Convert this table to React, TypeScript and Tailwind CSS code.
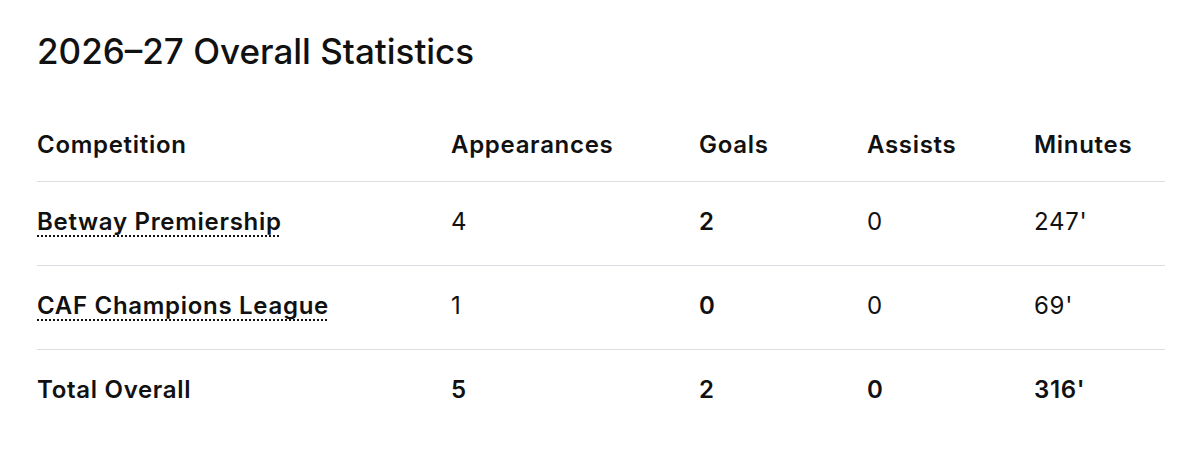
const rows = [
  { name: "Betway Premiership", apps: "4", goals: "2", assists: "0", mins: "247'" },
  { name: "CAF Champions League", apps: "1", goals: "0", assists: "0", mins: "69'" },
];

export default function App() {
  return (
    <div className="min-h-screen bg-white pl-[37px] pt-[31px] text-[#111111]" style={{ fontFamily: "Inter, 'Noto Sans', sans-serif" }}>
      <h2 className="mb-[36px] text-[35px] font-medium leading-[40px]">2026–27 Overall Statistics</h2>
      <table className="w-[1128px] table-fixed border-collapse text-left text-[24px] leading-[28px] tracking-[0.7px]">
        <colgroup>
          <col className="w-[414px]" />
          <col className="w-[248px]" />
          <col className="w-[168px]" />
          <col className="w-[167px]" />
          <col className="w-[131px]" />
        </colgroup>
        <thead>
          <tr className="border-b border-[#dcdce2]">
            <th className="pt-[24px] pb-[22px] font-semibold">Competition</th>
            <th className="pt-[24px] pb-[22px] font-semibold">Appearances</th>
            <th className="pt-[24px] pb-[22px] font-semibold">Goals</th>
            <th className="pt-[24px] pb-[22px] font-semibold">Assists</th>
            <th className="pt-[24px] pb-[22px] font-semibold">Minutes</th>
          </tr>
        </thead>
        <tbody>
          {rows.map((r) => (
            <tr key={r.name} className="border-b border-[#dcdce2]">
              <td className="pt-[26px] pb-[29px] font-semibold">
                <span className="underline decoration-dotted decoration-[2px] underline-offset-[5px]">{r.name}</span>
              </td>
              <td className="pt-[26px] pb-[29px]">{r.apps}</td>
              <td className="pt-[26px] pb-[29px] font-semibold">{r.goals}</td>
              <td className="pt-[26px] pb-[29px]">{r.assists}</td>
              <td className="pt-[26px] pb-[29px]">{r.mins}</td>
            </tr>
          ))}
          <tr>
            <td className="pt-[26px] pb-[29px] font-semibold">Total Overall</td>
            <td className="pt-[26px] pb-[29px] font-semibold">5</td>
            <td className="pt-[26px] pb-[29px] font-semibold">2</td>
            <td className="pt-[26px] pb-[29px] font-semibold">0</td>
            <td className="pt-[26px] pb-[29px] font-semibold">316'</td>
          </tr>
        </tbody>
      </table>
    </div>
  );
}
